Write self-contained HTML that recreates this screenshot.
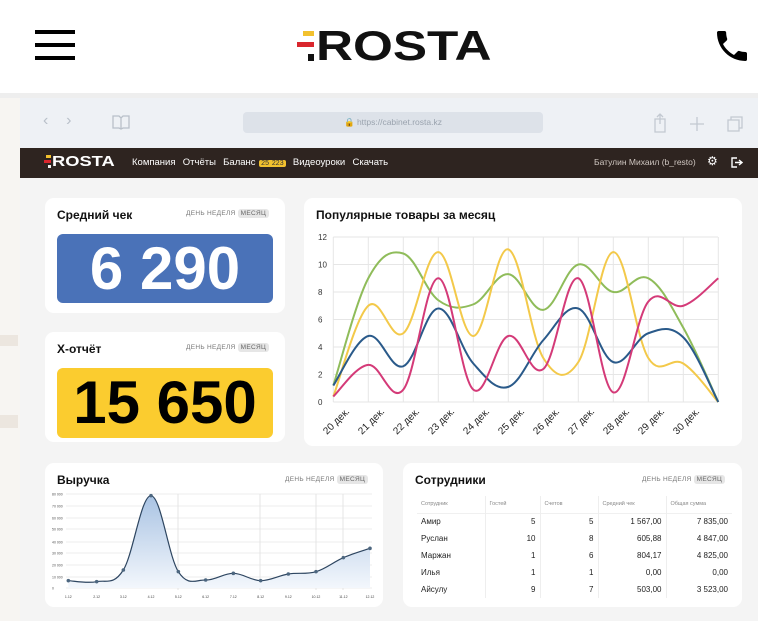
<!DOCTYPE html>
<html><head><meta charset="utf-8">
<style>
*{margin:0;padding:0;box-sizing:border-box}
body{width:758px;height:621px;overflow:hidden;background:#f7f5f2;font-family:"Liberation Sans","DejaVu Sans",sans-serif;position:relative}
.abs{position:absolute}
.card{position:absolute;background:#fff;border-radius:9px}
.ttl{position:absolute;font-weight:bold;font-size:12px;color:#111}
.tabs{position:absolute;font-size:6.5px;color:#777;letter-spacing:.3px}
.tabs b{background:#e6e6e6;border-radius:3px;padding:1px 3px;font-weight:normal;color:#666}
.big{position:absolute;border-radius:6px;text-align:center;font-weight:bold;font-size:60px;line-height:70px;letter-spacing:0px}
table{border-collapse:collapse;font-size:8px;color:#222}
td{height:17px;padding:0 4px}
</style></head><body>
<div class="abs" style="left:0;top:0;width:758px;height:93px;background:#fff"></div>
<div class="abs" style="left:35px;top:30px;width:40px;height:4px;background:#000"></div>
<div class="abs" style="left:35px;top:43px;width:40px;height:4px;background:#000"></div>
<div class="abs" style="left:35px;top:56px;width:40px;height:4px;background:#000"></div>
<div class="abs" style="left:303px;top:31px;width:11px;height:5px;background:#f2c12e"></div>
<div class="abs" style="left:297px;top:42px;width:17px;height:5px;background:#d9262d"></div>
<div class="abs" style="left:308px;top:54px;width:6px;height:7px;background:#111"></div>
<div class="abs" style="left:316px;top:24px;font-size:42px;font-weight:bold;color:#111;line-height:44px;transform:scaleX(1.22);transform-origin:0 0">ROSTA</div>
<svg class="abs" style="left:712px;top:26px" width="40" height="40" viewBox="0 0 24 24"><path d="M6.6 10.8c1.4 2.8 3.8 5.1 6.6 6.6l2.2-2.2c.3-.3.7-.4 1-.2 1.1.4 2.3.6 3.6.6.6 0 1 .4 1 1V20c0 .6-.4 1-1 1C10.6 21 3 13.4 3 4c0-.6.4-1 1-1h3.5c.6 0 1 .4 1 1 0 1.3.2 2.5.6 3.6.1.3 0 .7-.2 1z" fill="#000"/></svg>
<div class="abs" style="left:0;top:93px;width:758px;height:5px;background:#eee"></div>
<div class="abs" style="left:0;top:335px;width:18px;height:11px;background:#ece6df"></div>
<div class="abs" style="left:0;top:415px;width:18px;height:13px;background:#ece6df"></div>
<div class="abs" style="left:20px;top:98px;width:738px;height:523px;background:#f4f4f4"></div>
<div class="abs" style="left:20px;top:98px;width:738px;height:50px;background:#eef1f5"></div>
<div class="abs" style="left:43px;top:112px;font-size:16px;color:#b9c0c9">&#8249;&nbsp;&nbsp;&nbsp;&nbsp;&#8250;</div>
<svg class="abs" style="left:112px;top:114px" width="18" height="16"><path d="M1 2h6l2 2 2-2h6v12h-6l-2 1-2-1H1z M9 4v11" fill="none" stroke="#b9c0c9" stroke-width="1.3"/></svg>
<div class="abs" style="left:243px;top:112px;width:300px;height:21px;background:#dde2e9;border-radius:4px;font-size:8.5px;color:#9aa3ae;text-align:center;line-height:21px">&#128274; https://cabinet.rosta.kz</div>
<svg class="abs" style="left:650px;top:112px" width="95" height="22"><path d="M5 7h10v13H5z M10 2v10 M7 5l3-3 3 3" fill="none" stroke="#c3c9d1" stroke-width="1.3"/><path d="M47 5v14M40 12h14" stroke="#c3c9d1" stroke-width="1.3"/><path d="M78 8h11v11H78z M81 8V5h11v11h-3" fill="none" stroke="#c3c9d1" stroke-width="1.3"/></svg>
<div class="abs" style="left:20px;top:148px;width:738px;height:30px;background:#2e2420"></div>
<div class="abs" style="left:46px;top:155px;width:5px;height:3px;background:#f2c12e"></div>
<div class="abs" style="left:44px;top:160px;width:7px;height:3px;background:#d9262d"></div>
<div class="abs" style="left:48px;top:165px;width:3px;height:3px;background:#eee"></div>
<div class="abs" style="left:52px;top:153px;font-size:15px;font-weight:bold;color:#fff;transform:scaleX(1.22);transform-origin:0 0">ROSTA</div>
<div class="abs" style="left:132px;top:157px;font-size:9.5px;color:#fff;word-spacing:1px">Компания&nbsp; Отчёты&nbsp; Баланс <span style="background:#f2c12e;color:#333;font-size:7px;padding:0 2px;border-radius:2px">25 223</span>&nbsp; Видеоуроки&nbsp; Скачать</div>
<div class="abs" style="left:594px;top:157px;font-size:8.5px;color:#cfc6c0">Батулин Михаил (b_resto)</div>
<div class="abs" style="left:707px;top:154px;font-size:12px;color:#fff">&#9881;</div>
<svg class="abs" style="left:731px;top:157px" width="12" height="11"><path d="M6 1H1v9h5 M4 5.5h7 M8 3l3 2.5L8 8" fill="none" stroke="#fff" stroke-width="1.4"/></svg>

<div class="card" style="left:45px;top:198px;width:240px;height:115px"></div>
<div class="ttl" style="left:57px;top:208px">Средний чек</div>
<div class="tabs" style="left:186px;top:210px">ДЕНЬ НЕДЕЛЯ <b>МЕСЯЦ</b></div>
<div class="big" style="left:57px;top:234px;width:216px;height:69px;background:#4a72b8;color:#fff">6 290</div>
<div class="card" style="left:45px;top:332px;width:240px;height:110px"></div>
<div class="ttl" style="left:57px;top:342px">Х-отчёт</div>
<div class="tabs" style="left:186px;top:344px">ДЕНЬ НЕДЕЛЯ <b>МЕСЯЦ</b></div>
<div class="big" style="left:57px;top:368px;width:216px;height:70px;background:#fbcc2f;color:#000">15 650</div>

<div class="card" style="left:304px;top:198px;width:438px;height:248px"></div>
<div class="ttl" style="left:316px;top:208px">Популярные товары за месяц</div>
<svg id="pop" class="abs" style="left:0;top:0" width="758" height="621"></svg>

<div class="card" style="left:45px;top:463px;width:338px;height:144px"></div>
<div class="ttl" style="left:57px;top:473px">Выручка</div>
<div class="tabs" style="left:285px;top:476px">ДЕНЬ НЕДЕЛЯ <b>МЕСЯЦ</b></div>
<svg id="rev" class="abs" style="left:0;top:0" width="758" height="621"></svg>

<div class="card" style="left:403px;top:463px;width:339px;height:144px"></div>
<div class="ttl" style="left:415px;top:473px">Сотрудники</div>
<div class="tabs" style="left:642px;top:476px">ДЕНЬ НЕДЕЛЯ <b>МЕСЯЦ</b></div>
<table class="abs" style="left:417px;top:496px;width:315px">
<tr style="font-size:5.5px;color:#888;border-bottom:1px solid #f0f0f0"><td style="width:68px">Сотрудник</td><td style="width:55px;border-left:1px solid #eee">Гостей</td><td style="width:58px;border-left:1px solid #eee">Счетов</td><td style="width:68px;border-left:1px solid #eee">Средний чек</td><td style="border-left:1px solid #eee">Общая сумма</td></tr>
<tr><td>Амир</td><td align="right" style="border-left:1px solid #eee">5</td><td align="right" style="border-left:1px solid #eee">5</td><td align="right" style="border-left:1px solid #eee">1 567,00</td><td align="right" style="border-left:1px solid #eee">7 835,00</td></tr>
<tr><td>Руслан</td><td align="right" style="border-left:1px solid #eee">10</td><td align="right" style="border-left:1px solid #eee">8</td><td align="right" style="border-left:1px solid #eee">605,88</td><td align="right" style="border-left:1px solid #eee">4 847,00</td></tr>
<tr><td>Маржан</td><td align="right" style="border-left:1px solid #eee">1</td><td align="right" style="border-left:1px solid #eee">6</td><td align="right" style="border-left:1px solid #eee">804,17</td><td align="right" style="border-left:1px solid #eee">4 825,00</td></tr>
<tr><td>Илья</td><td align="right" style="border-left:1px solid #eee">1</td><td align="right" style="border-left:1px solid #eee">1</td><td align="right" style="border-left:1px solid #eee">0,00</td><td align="right" style="border-left:1px solid #eee">0,00</td></tr>
<tr><td>Айсулу</td><td align="right" style="border-left:1px solid #eee">9</td><td align="right" style="border-left:1px solid #eee">7</td><td align="right" style="border-left:1px solid #eee">503,00</td><td align="right" style="border-left:1px solid #eee">3 523,00</td></tr>
</table>

<script>
function smooth(p){var d="M"+p[0][0]+","+p[0][1];for(var i=0;i<p.length-1;i++){var p0=p[i-1]||p[i],p1=p[i],p2=p[i+1],p3=p[i+2]||p2;var t=0.18;var c1x=p1[0]+(p2[0]-p0[0])*t,c1y=p1[1]+(p2[1]-p0[1])*t,c2x=p2[0]-(p3[0]-p1[0])*t,c2y=p2[1]-(p3[1]-p1[1])*t;d+=" C"+c1x+","+c1y+" "+c2x+","+c2y+" "+p2[0]+","+p2[1];}return d;}
var s='',X0=333.3,DX=35,Y0=402,DY=13.75;
for(var v=0;v<=12;v+=2){var y=Y0-v*DY;s+='<line x1="'+X0+'" x2="718" y1="'+y+'" y2="'+y+'" stroke="#e6e6e6"/><text x="318" y="'+(y+3)+'" font-size="8" fill="#333" font-family="Liberation Sans">'+v+'</text>';}
for(var i=0;i<12;i++){var x=X0+i*DX;s+='<line x1="'+x+'" x2="'+x+'" y1="237" y2="402" stroke="#e6e6e6"/>';}
var days=["20","21","22","23","24","25","26","27","28","29","30"];
for(var i=0;i<11;i++){var x=350+i*35;s+='<text transform="translate('+x+',412) rotate(-45)" text-anchor="end" font-size="10" fill="#222" font-family="Liberation Sans">'+days[i]+' дек.</text>';}
var ser=[["#8fbc5a",[1.2,9,10.8,7.4,7.1,9.3,6.7,10,8,9,5.4,0]],["#f3c94a",[0.4,7,5,10.9,4.8,11.1,3.2,2.9,10.9,3.2,2.8,0]],["#2a5a8a",[1.2,4.8,2.6,6.8,2.8,1.1,4.5,6.8,2.9,5,4.7,0]],["#d43a78",[0.4,2.7,0.9,9,0.9,4.8,2.4,9,0.7,7.3,7,9]]];
ser.forEach(function(a){var p=a[1].map(function(v,i){return [X0+i*DX,Y0-v*DY]});s+='<path d="'+smooth(p)+'" fill="none" stroke="'+a[0]+'" stroke-width="2"/>';});
document.getElementById('pop').innerHTML=s;
var r='';var gy=[494,506,518,529,542,553,565,577,588];var lb=["80 000","70 000","60 000","50 000","40 000","30 000","20 000","10 000","0"];
for(var i=0;i<gy.length;i++){r+='<line x1="66" x2="372" y1="'+gy[i]+'" y2="'+gy[i]+'" stroke="#eee"/><text x="52" y="'+(gy[i]+1.5)+'" font-size="3.5" fill="#555" font-family="Liberation Sans">'+lb[i]+'</text>';}
[178,260,316,343].forEach(function(x){r+='<line x1="'+x+'" x2="'+x+'" y1="494" y2="590" stroke="#e4e4e4"/>';});
var zp=[[85,362],[170,365],[250,330],[333,107],[415,335],[497,360],[580,340],[662,362],[745,342],[828,335],[910,293],[990,265]];
var pts=zp.map(function(q){return [40+q[0]/3,460+q[1]/3]});
var d=smooth(pts);
r+='<defs><linearGradient id="g" x1="0" y1="0" x2="0" y2="1"><stop offset="0" stop-color="#a9c3e3"/><stop offset="1" stop-color="#f3f7fc"/></linearGradient></defs>';
r+='<path d="'+d+' L'+pts[11][0]+',588 L'+pts[0][0]+',588Z" fill="url(#g)"/><path d="'+d+'" fill="none" stroke="#2d4560" stroke-width="1.2"/>';
pts.forEach(function(p,i){r+='<circle cx="'+p[0]+'" cy="'+p[1]+'" r="1.8" fill="#4d6780"/><text x="'+p[0]+'" y="598" font-size="3.5" text-anchor="middle" fill="#444" font-family="Liberation Sans">'+(i+1)+'.12</text>';});
document.getElementById('rev').innerHTML=r;
</script>
</body></html>
